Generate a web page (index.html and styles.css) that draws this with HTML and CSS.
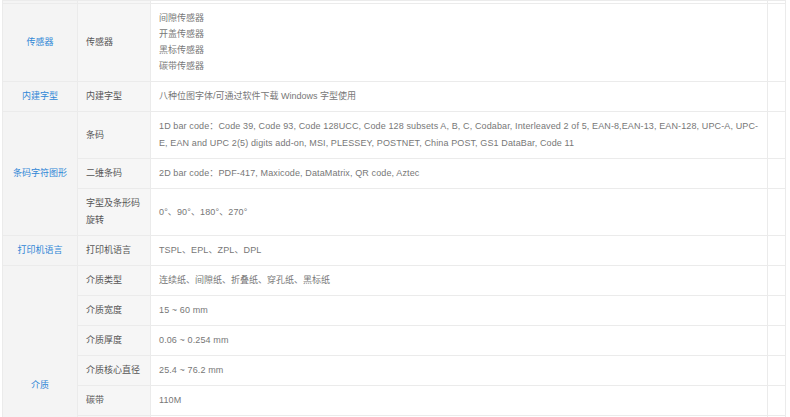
FILE: index.html
```html
<!DOCTYPE html>
<html lang="zh-CN">
<head>
    <meta charset="UTF-8">
    <meta name="viewport" content="width=device-width, initial-scale=1.0">
    <title>产品参数</title>
    <link rel="stylesheet" href="styles.css">
</head>
<body>
    <table class="spec-table">
        <colgroup>
            <col class="col-group">
            <col class="col-name">
            <col class="col-value">
            <col class="col-extra">
        </colgroup>
        <tbody>
            <!-- 上一组的末尾 -->
            <tr class="row-cut">
                <td class="group"></td>
                <td class="name"></td>
                <td class="value"></td>
                <td class="extra"></td>
            </tr>

            <tr>
                <td class="group">传感器</td>
                <td class="name">传感器</td>
                <td class="value list">
                    <div>间隙传感器</div>
                    <div>开盖传感器</div>
                    <div>黑标传感器</div>
                    <div>碳带传感器</div>
                </td>
                <td class="extra"></td>
            </tr>

            <tr>
                <td class="group">内建字型</td>
                <td class="name">内建字型</td>
                <td class="value">八种位图字体/可通过软件下载 Windows 字型使用</td>
                <td class="extra"></td>
            </tr>

            <tr>
                <td class="group" rowspan="3">条码字符图形</td>
                <td class="name">条码</td>
                <td class="value latin">1D bar code：Code 39, Code 93, Code 128UCC, Code 128 subsets A, B, C, Codabar, Interleaved 2 of 5, EAN-8,EAN-13, EAN-128, UPC-A, UPC-<wbr>E, EAN and UPC 2(5) digits add-on, MSI, PLESSEY, POSTNET, China POST, GS1 DataBar, Code 11</td>
                <td class="extra"></td>
            </tr>
            <tr>
                <td class="name">二维条码</td>
                <td class="value latin">2D bar code：PDF-417, Maxicode, DataMatrix, QR code, Aztec</td>
                <td class="extra"></td>
            </tr>
            <tr>
                <td class="name">字型及条形码旋转</td>
                <td class="value latin">0°、90°、180°、270°</td>
                <td class="extra"></td>
            </tr>

            <tr>
                <td class="group">打印机语言</td>
                <td class="name">打印机语言</td>
                <td class="value latin">TSPL、EPL、ZPL、DPL</td>
                <td class="extra"></td>
            </tr>

            <tr>
                <td class="group" rowspan="8">介质</td>
                <td class="name">介质类型</td>
                <td class="value">连续纸、间隙纸、折叠纸、穿孔纸、黑标纸</td>
                <td class="extra"></td>
            </tr>
            <tr>
                <td class="name">介质宽度</td>
                <td class="value latin">15 ~ 60 mm</td>
                <td class="extra"></td>
            </tr>
            <tr>
                <td class="name">介质厚度</td>
                <td class="value latin">0.06 ~ 0.254 mm</td>
                <td class="extra"></td>
            </tr>
            <tr>
                <td class="name">介质核心直径</td>
                <td class="value latin">25.4 ~ 76.2 mm</td>
                <td class="extra"></td>
            </tr>
            <tr>
                <td class="name">碳带</td>
                <td class="value latin">110M</td>
                <td class="extra"></td>
            </tr>
            <tr>
                <td class="name">碳带宽度</td>
                <td class="value latin">最大 60 mm</td>
                <td class="extra"></td>
            </tr>
            <tr>
                <td class="name">碳带核心</td>
                <td class="value latin">12.7 mm</td>
                <td class="extra"></td>
            </tr>
            <tr>
                <td class="name">标签卷外径</td>
                <td class="value latin">最大 127 mm</td>
                <td class="extra"></td>
            </tr>
        </tbody>
    </table>
</body>
</html>
```

FILE: styles.css
```css
body {
    margin: 0;
    background-color: #ffffff;
    font-family: "Liberation Sans", "Noto Sans CJK SC", sans-serif;
    font-size: 9px;
    color: #777;
}

.spec-table {
    border-collapse: collapse;
    table-layout: fixed;
    width: 783px;
    margin-left: 2px;
}

.col-group { width: 75px; }
.col-name  { width: 73px; }
.col-value { width: 617px; }
.col-extra { width: 18px; }

.spec-table td {
    border: 1px solid #ebebeb;
    padding: 6px 8px;
    line-height: 17px;
    vertical-align: middle;
}

.row-cut td {
    height: 2px;
    padding: 0;
    line-height: 0;
}

/* 分组名 */
.spec-table td.group {
    background-color: #f4f4f4;
    color: #2f86d6;
    text-align: center;
}

/* 参数名 */
.spec-table td.name {
    background-color: #f6f6f6;
    color: #555;
}

.spec-table td.value {
    color: #777;
}

/* 英文参数稍微放宽字距 */
.spec-table td.latin {
    letter-spacing: 0.12px;
}

.spec-table td.list {
    padding: 6px 8px 7px;
    line-height: 16px;
}

.spec-table td.extra {
    padding: 0;
}
```
